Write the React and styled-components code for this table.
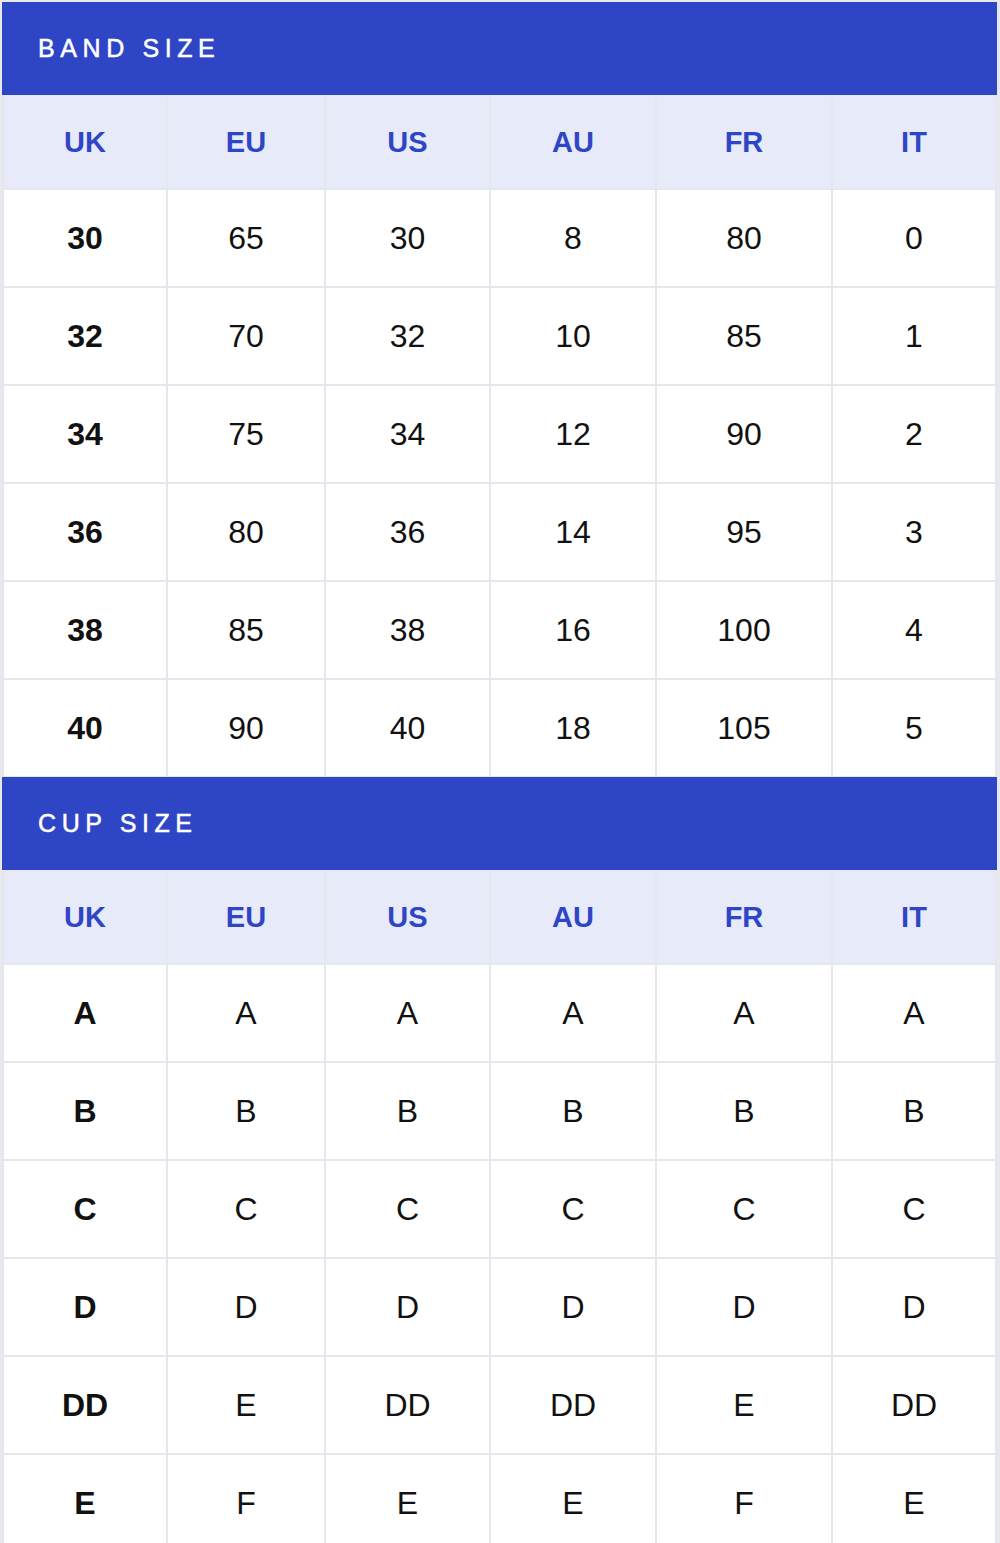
import React from 'react'
import styled, { createGlobalStyle } from 'styled-components'

const GlobalStyle = createGlobalStyle`
  html, body {
    margin: 0;
    padding: 0;
    background: #e8e8ef;
  }
  body {
    font-family: 'Liberation Sans', Arial, Helvetica, sans-serif;
    -webkit-font-smoothing: antialiased;
  }
`

const COLUMNS = ['UK', 'EU', 'US', 'AU', 'FR', 'IT']

const BAND_ROWS = [
  ['30', '65', '30', '8', '80', '0'],
  ['32', '70', '32', '10', '85', '1'],
  ['34', '75', '34', '12', '90', '2'],
  ['36', '80', '36', '14', '95', '3'],
  ['38', '85', '38', '16', '100', '4'],
  ['40', '90', '40', '18', '105', '5'],
]

const CUP_ROWS = [
  ['A', 'A', 'A', 'A', 'A', 'A'],
  ['B', 'B', 'B', 'B', 'B', 'B'],
  ['C', 'C', 'C', 'C', 'C', 'C'],
  ['D', 'D', 'D', 'D', 'D', 'D'],
  ['DD', 'E', 'DD', 'DD', 'E', 'DD'],
  ['E', 'F', 'E', 'E', 'F', 'E'],
]

const Page = styled.main`
  width: 995px;
  padding: 2px 0 0 2px;
`

const Section = styled.section`
  display: flex;
  flex-direction: column;
`

const Title = styled.h2`
  margin: 0;
  height: 93px;
  display: flex;
  align-items: center;
  padding-left: 36px;
  background: #2e45c6;
  color: #fff;
  font-size: 25px;
  font-weight: 400;
  letter-spacing: 5.6px;
  -webkit-text-stroke: 0.5px #fff;
`

const Grid = styled.div`
  display: grid;
  grid-template-columns: 162px 156px 163px 164px 174px 162px;
  gap: 2px;
  padding: 1px 2px 1px;
  background: #e6e6ed;
`

const HeadCell = styled.div`
  display: flex;
  align-items: center;
  justify-content: center;
  background: #e7eaf9;
  color: #2e45c6;
  font-size: 29px;
  font-weight: 700;
`

const Cell = styled.div`
  display: flex;
  align-items: center;
  justify-content: center;
  background: #fff;
  color: #111;
  font-size: 32px;
  font-weight: ${({ $key }) => ($key ? 700 : 400)};
`

const SizeTable = ({ title, rows }) => (
  <Section>
    <Title>{title}</Title>
    <Grid style={{ gridTemplateRows: `92px repeat(${rows.length}, 96px)` }}>
      {COLUMNS.map(c => (
        <HeadCell key={c}>{c}</HeadCell>
      ))}
      {rows.map((row, i) =>
        row.map((v, j) => (
          <Cell key={`${i}-${j}`} $key={j === 0}>
            {v}
          </Cell>
        )),
      )}
    </Grid>
  </Section>
)

export default function App() {
  return (
    <Page>
      <GlobalStyle />
      <SizeTable title="BAND SIZE" rows={BAND_ROWS} />
      <SizeTable title="CUP SIZE" rows={CUP_ROWS} />
    </Page>
  )
}
